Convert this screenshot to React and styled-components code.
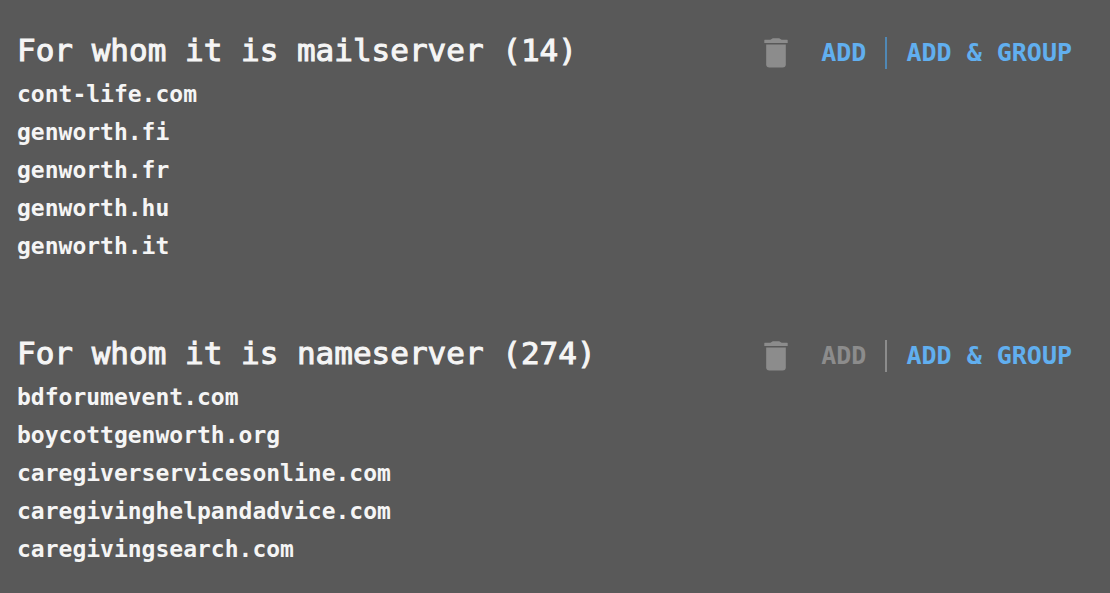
import React from 'react';
import styled, {createGlobalStyle} from 'styled-components';

const groups = [
    {
        id: 'mailserver',
        title: 'For whom it is mailserver',
        total: 14,
        can_add: true,
        domains: ['cont-life.com', 'genworth.fi', 'genworth.fr', 'genworth.hu', 'genworth.it'],
    },
    {
        id: 'nameserver',
        title: 'For whom it is nameserver',
        total: 274,
        can_add: false,
        domains: [
            'bdforumevent.com',
            'boycottgenworth.org',
            'caregiverservicesonline.com',
            'caregivinghelpandadvice.com',
            'caregivingsearch.com',
        ],
    },
];

const App = () => {
    return (
        <>
            <GlobalStyle/>
            <Page>
                {groups.map(cur => {
                    return <DomainGroup key={cur.id} {...cur}/>;
                })}
            </Page>
        </>
    );
};

export default App;

const DomainGroup = (props) => {
    const {id, title, total, can_add, domains} = props;
    return (
        <section aria-labelledby={id}>
            <GroupHeader>
                <GroupTitle id={id}>{title} ({total})</GroupTitle>
                <Actions>
                    <IconButton type='button' aria-label='Delete'>
                        <TrashIcon/>
                    </IconButton>
                    <ActionButton type='button' disabled={!can_add}>ADD</ActionButton>
                    <Divider $active={can_add}/>
                    <ActionButton type='button'>ADD &amp; GROUP</ActionButton>
                </Actions>
            </GroupHeader>
            <DomainUl>
                {domains.map(cur => {
                    return <DomainLi key={cur}>{cur}</DomainLi>;
                })}
            </DomainUl>
        </section>
    );
};

const TrashIcon = () => (
    <svg width='24' height='30' viewBox='0 0 24 30' fill='currentColor' aria-hidden='true'>
        <path d='M0.8 1.8H6.4C7.6 0.9 8.4 0.3 9.6 0.3H14.4C15.6 0.3 16.4 0.9 17.6 1.8H23.2Q23.7 1.8 23.7 2.3V5H0.3V2.3Q0.3 1.8 0.8 1.8Z'/>
        <path d='M2.2 6.4H21.8V26.5Q21.8 29.4 18.6 29.4H5.4Q2.2 29.4 2.2 26.5Z'/>
    </svg>
);

const GlobalStyle = createGlobalStyle`
    body {
        margin: 0;
        background: #595959;
        color: #f5f5f5;
        font-family: "DejaVu Sans Mono", "Liberation Mono", monospace;
    }
`

const Page = styled.main`
    display: flex;
    flex-direction: column;
    gap: 66px;
    padding: 28px 38px 24px 17px;
`

const GroupHeader = styled.header`
    display: flex;
    justify-content: space-between;
    align-items: flex-start;
    height: 47px;
`

const GroupTitle = styled.h2`
    margin: 0;
    font-size: 31px;
    font-weight: 400;
    line-height: 44px;
    white-space: nowrap;
    -webkit-text-stroke: 1px currentColor;
`

const Actions = styled.div`
    display: flex;
    align-items: center;
    padding-top: 9px;
`

const IconButton = styled.button`
    display: flex;
    margin: 0 33px 0 0;
    padding: 0;
    border: 0;
    background: none;
    color: #8c8c8c;
    cursor: pointer;
`

const ActionButton = styled.button`
    padding: 0;
    border: 0;
    background: none;
    color: #61afef;
    font-family: inherit;
    font-size: 25px;
    font-weight: 700;
    line-height: 32px;
    white-space: nowrap;
    cursor: pointer;
    &:disabled {
        color: #8c8c8c;
        cursor: default;
    }
`

const Divider = styled.span`
    width: 2px;
    height: 32px;
    margin: 0 19px;
    background: ${(props) => props.$active ? '#5088b5' : '#8c8c8c'};
`

const DomainUl = styled.ul`
    margin: 0;
    padding: 0;
    list-style: none;
`

const DomainLi = styled.li`
    font-size: 23px;
    font-weight: 700;
    line-height: 38px;
`
